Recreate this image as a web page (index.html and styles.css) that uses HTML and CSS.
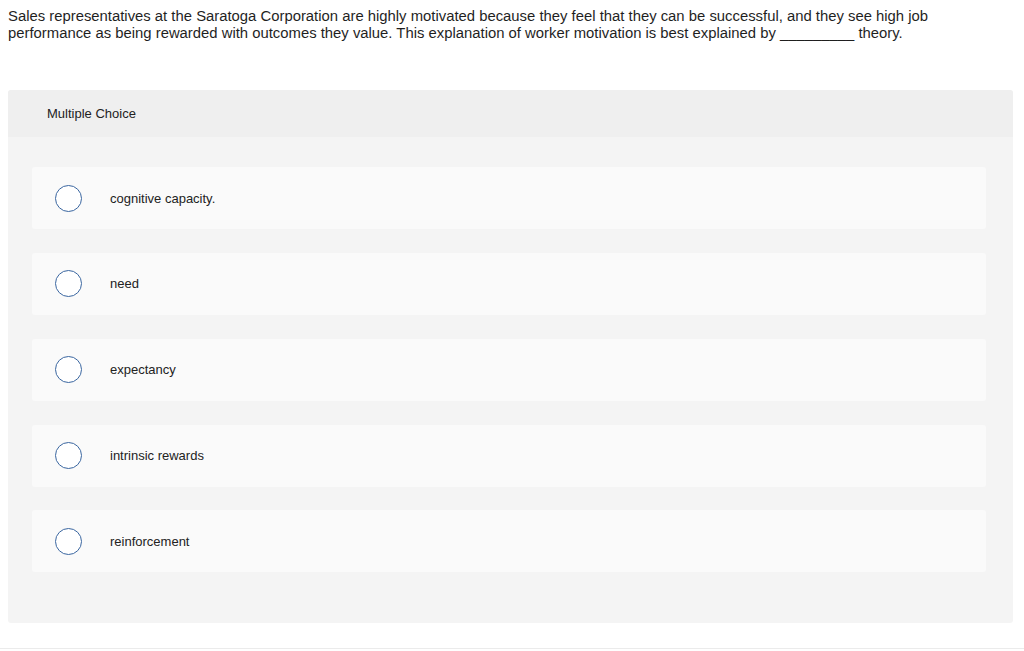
FILE: index.html
```html
<!DOCTYPE html>
<html>
<head>
<meta charset="utf-8">
<link rel="stylesheet" href="styles.css">
</head>
<body>
<p class="question">Sales representatives at the Saratoga Corporation are highly motivated because they feel that they can be successful, and they see high job performance as being rewarded with outcomes they value. This explanation of worker motivation is best explained by _________ theory.</p>
<div class="panel">
  <div class="panel-head">Multiple Choice</div>
  <div class="options">
    <div class="option"><span class="radio"></span><span class="label">cognitive capacity.</span></div>
    <div class="option"><span class="radio"></span><span class="label">need</span></div>
    <div class="option"><span class="radio"></span><span class="label">expectancy</span></div>
    <div class="option"><span class="radio"></span><span class="label">intrinsic rewards</span></div>
    <div class="option"><span class="radio"></span><span class="label">reinforcement</span></div>
  </div>
</div>
<div class="footer-line"></div>
</body>
</html>
```
FILE: styles.css
```css
html, body {
  margin: 0;
  background: #fff;
}
body {
  padding: 8px;
  font-family: "Liberation Sans", Arial, sans-serif;
  color: #222;
}
.question {
  margin: 0;
  font-size: 14.85px;
  line-height: 17px;
  width: 960px;
  color: #1f1f1f;
}
.panel {
  margin-top: 48px;
  width: 1005px;
  background: #f4f4f4;
  border-radius: 3px;
}
.panel-head {
  height: 47px;
  display: flex;
  align-items: center;
  padding-left: 39px;
  background: #efefef;
  font-size: 13px;
  color: #222;
  border-radius: 3px 3px 0 0;
}
.options {
  display: flex;
  flex-direction: column;
  gap: 23.85px;
  padding: 30px 27px 51px 24px;
}
.option {
  height: 62px;
  background: #fafafa;
  border-radius: 3px;
  display: flex;
  align-items: center;
  padding-left: 23px;
}
.radio {
  width: 25px;
  height: 25px;
  border: 1px solid #3a66a0;
  border-radius: 50%;
  background: #fff;
  flex: none;
}
.label {
  margin-left: 28px;
  font-size: 13px;
  color: #222;
}
.footer-line {
  position: absolute;
  left: 0;
  top: 648px;
  width: 1024px;
  height: 1px;
  background: #ebebeb;
}
```
